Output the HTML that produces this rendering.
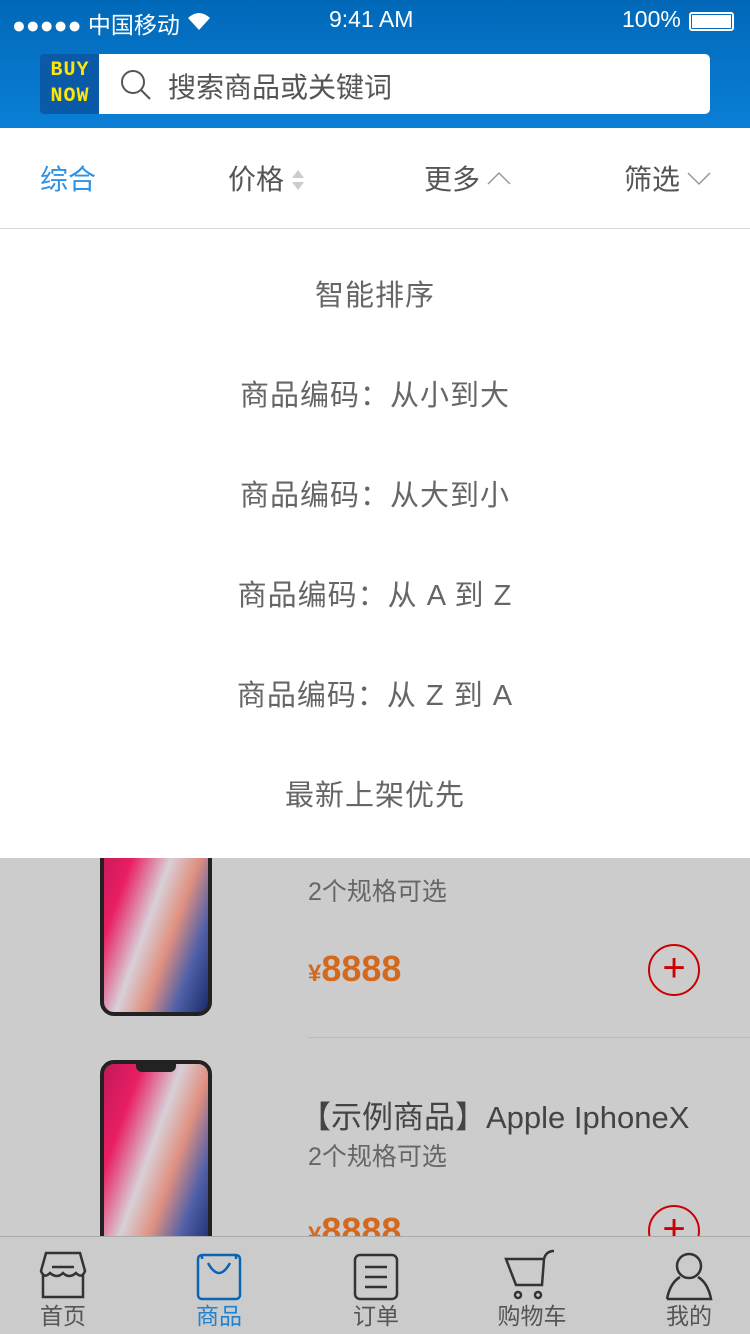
<!DOCTYPE html>
<html><head><meta charset="utf-8"><style>
*{margin:0;padding:0;box-sizing:border-box}
body{width:750px;height:1334px;overflow:hidden;position:relative;font-family:"Liberation Sans","Noto Sans CJK SC",sans-serif;background:#cccccc}
.hdr{position:absolute;left:0;top:0;width:750px;height:128px;background:linear-gradient(#0168b8,#0a7fd6)}
.st{position:absolute;top:6px;color:#fff;font-size:23px}
.logo{position:absolute;left:40px;top:54px;width:60px;height:60px;background:#0a5aa8;border-radius:4px 0 0 4px;color:#ffe600;font-family:"Liberation Mono",monospace;font-weight:bold;font-size:20px;line-height:26px;text-align:center;padding-top:4px;letter-spacing:1px}
.search{position:absolute;left:99px;top:54px;width:611px;height:60px;background:#fff;border-radius:0 5px 5px 0}
.search span{position:absolute;left:69px;top:12px;font-size:28px;color:#555}
.bar{position:absolute;left:0;top:128px;width:750px;height:101px;background:#fff;border-bottom:1px solid #d6d6d6}
.bar div{position:absolute;top:30px;font-size:28px;color:#555}
.menu{position:absolute;left:0;top:229px;width:750px;height:629px;background:#fff}
.menu div{position:absolute;left:0;width:750px;text-align:center;font-size:29px;color:#666;letter-spacing:1px}
.phone{position:absolute;left:100px;width:112px;border-radius:14px;border:4px solid #222;background:linear-gradient(110deg,#c2185b 0%,#e91e63 22%,#d8d0d8 45%,#e09080 62%,#5060a8 80%,#1a2a6a 100%)}
.t{position:absolute;left:308px;color:#444}
.plus{position:absolute;left:648px;width:52px;height:52px;border:2px solid #c00;border-radius:50%;color:#c00;font-size:40px;line-height:44px;text-align:center;font-weight:300}
.tab{position:absolute;left:0;top:1236px;width:750px;height:98px;background:#cbcbcb;border-top:1px solid #aaa}
.tab .l{position:absolute;top:60px;width:100px;text-align:center;font-size:23px;color:#555}
</style></head><body>
<div class="hdr">
<div class="st" style="left:12px">●●●●● 中国移动</div>
<svg style="position:absolute;left:186px;top:10px" width="26" height="22" viewBox="0 0 26 22"><path d="M13 20 L2 8 Q13 -2 24 8Z" fill="#fff"/></svg>
<div class="st" style="left:329px">9:41 AM</div>
<div class="st" style="left:622px">100%</div>
<div style="position:absolute;left:689px;top:12px;width:45px;height:19px;border:2px solid #fff;border-radius:3px;padding:1px"><div style="background:#fff;width:100%;height:100%"></div></div>
<div class="logo">BUY<br>NOW</div>
<div class="search">
<svg style="position:absolute;left:20px;top:14px" width="34" height="34" viewBox="0 0 34 34"><circle cx="14" cy="14" r="11" fill="none" stroke="#555" stroke-width="2"/><path d="M22 22 L31 31" stroke="#555" stroke-width="2"/></svg>
<span>搜索商品或关键词</span></div>
</div>
<div class="bar">
<div style="left:40px;color:#2e93e6">综合</div>
<div style="left:228px">价格</div>
<svg style="position:absolute;left:291px;top:40px" width="14" height="24"><path d="M7 2 L13 10 H1Z M7 22 L13 14 H1Z" fill="#ccc"/></svg>
<div style="left:424px">更多</div>
<svg style="position:absolute;left:486px;top:42px" width="26" height="16"><path d="M2 14 L13 3 L24 14" fill="none" stroke="#999" stroke-width="1.5"/></svg>
<div style="left:624px">筛选</div>
<svg style="position:absolute;left:686px;top:42px" width="26" height="16"><path d="M2 3 L13 14 L24 3" fill="none" stroke="#999" stroke-width="1.5"/></svg>
</div>
<div class="phone" style="top:830px;height:186px"></div>
<div class="menu">
<div style="top:43px">智能排序</div>
<div style="top:143px">商品编码：从小到大</div>
<div style="top:243px">商品编码：从大到小</div>
<div style="top:343px">商品编码：从 A 到 Z</div>
<div style="top:443px">商品编码：从 Z 到 A</div>
<div style="top:543px">最新上架优先</div>
</div>
<div class="t" style="top:872px;font-size:25px;color:#666">2个规格可选</div>
<div class="t" style="top:948px;font-size:36px;color:#d2691e;font-weight:bold"><span style="font-size:24px">¥</span>8888</div>
<div class="plus" style="top:944px">+</div>
<div style="position:absolute;left:308px;top:1037px;width:442px;height:1px;background:#bbb"></div>
<div class="phone" style="top:1060px;height:200px"><div style="width:40px;height:8px;background:#222;margin:0 auto;border-radius:0 0 6px 6px"></div></div>
<div class="t" style="top:1092px;font-size:31px;left:300px">【示例商品】Apple IphoneX</div>
<div class="t" style="top:1137px;font-size:25px;color:#666">2个规格可选</div>
<div class="t" style="top:1210px;font-size:36px;color:#d2691e;font-weight:bold"><span style="font-size:24px">¥</span>8888</div>
<div class="plus" style="top:1205px">+</div>
<div class="tab">
<svg style="position:absolute;left:38px;top:14px" width="50" height="48" viewBox="0 0 50 48" fill="none" stroke="#333" stroke-width="2.5"><path d="M8 2 H42 L47 20 Q44 28 38 22 Q31 28 25 22 Q19 28 12 22 Q6 28 3 20Z M14 16 H36 M5 24 V46 H45 V24"/></svg>
<svg style="position:absolute;left:196px;top:16px" width="46" height="48" viewBox="0 0 46 48" fill="none" stroke="#0a64b4" stroke-width="2.5"><rect x="2" y="2" width="42" height="44" rx="4"/><path d="M6 2 V6 M40 2 V6 M12 10 Q23 30 34 10"/></svg>
<svg style="position:absolute;left:353px;top:16px" width="46" height="48" viewBox="0 0 46 48" fill="none" stroke="#333" stroke-width="2.5"><rect x="2" y="2" width="42" height="44" rx="5"/><path d="M12 14 H34 M12 24 H34 M12 34 H34"/></svg>
<svg style="position:absolute;left:504px;top:12px" width="56" height="54" viewBox="0 0 56 54" fill="none" stroke="#333" stroke-width="2.5"><path d="M2 10 H40 L38 36 H12 Z M40 10 Q42 2 50 2 M12 36 H38"/><circle cx="14" cy="46" r="3"/><circle cx="34" cy="46" r="3"/></svg>
<svg style="position:absolute;left:664px;top:14px" width="50" height="50" viewBox="0 0 50 50" fill="none" stroke="#333" stroke-width="2.5"><circle cx="25" cy="15" r="12"/><path d="M3 48 Q6 32 16 26 M34 26 Q44 32 47 48 H3"/></svg>
<div class="l" style="left:13px">首页</div>
<div class="l" style="left:169px;color:#1e82d0">商品</div>
<div class="l" style="left:326px">订单</div>
<div class="l" style="left:482px">购物车</div>
<div class="l" style="left:639px">我的</div>
</div>
</body></html>
